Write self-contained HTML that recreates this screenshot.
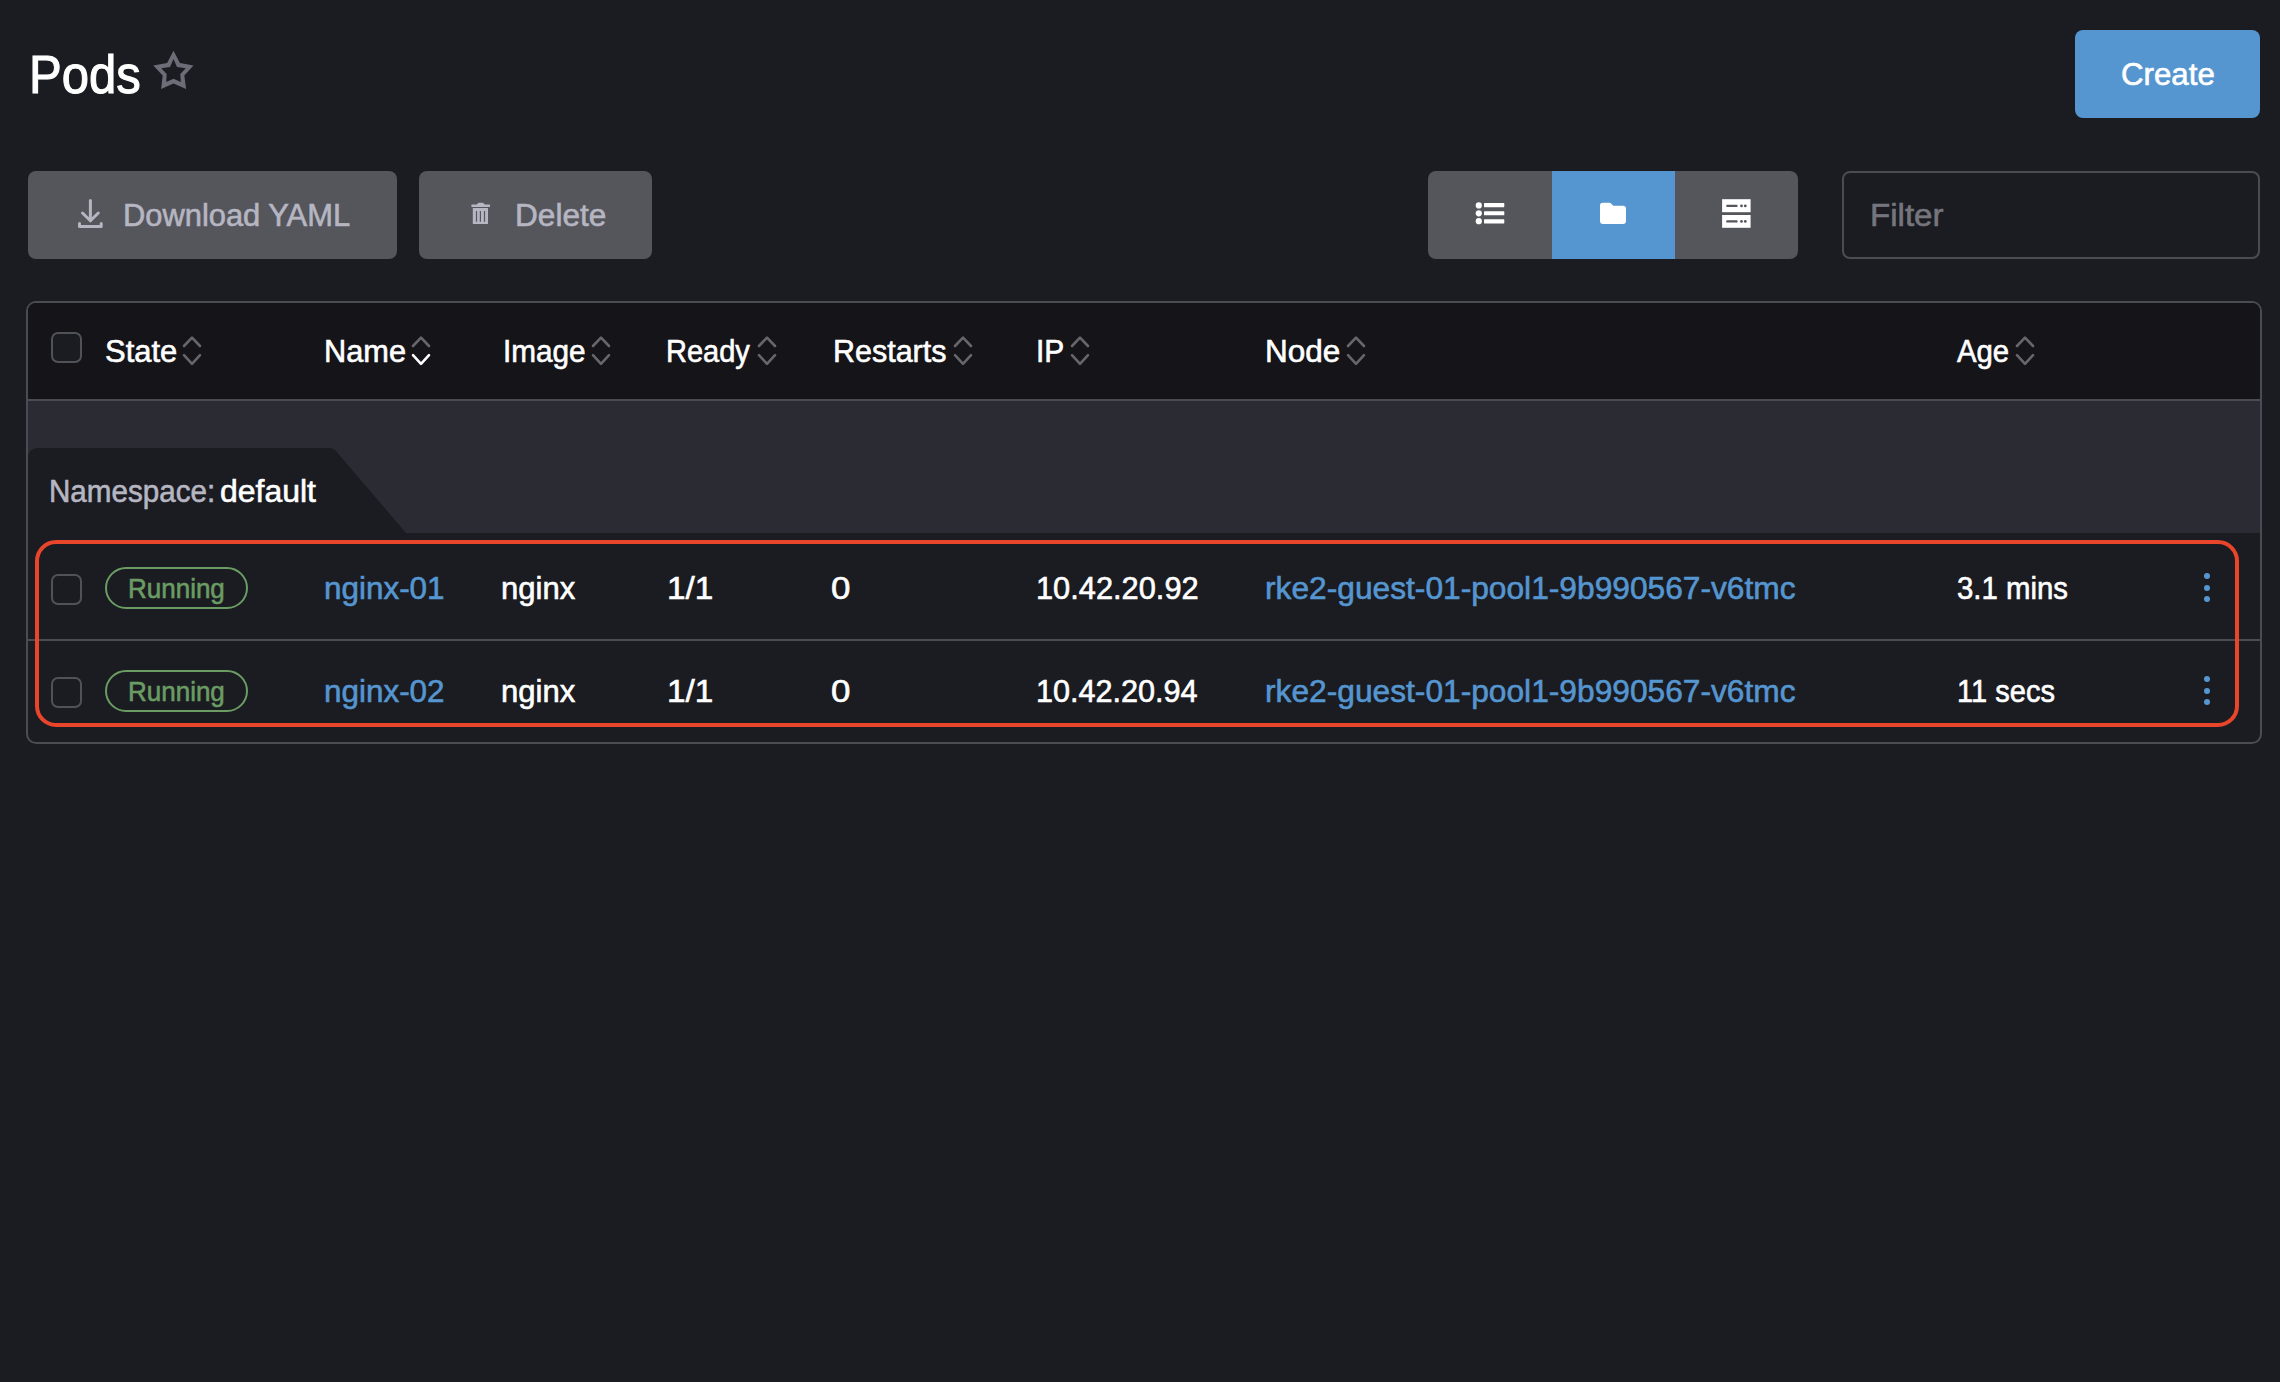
<!DOCTYPE html>
<html><head><meta charset="utf-8"><title>Pods</title>
<style>
html,body{margin:0;padding:0;}
body{width:2280px;height:1382px;background:#1b1c21;overflow:hidden;position:relative;font-family:"Liberation Sans",sans-serif;}
.abs{position:absolute;}
.tx{position:absolute;white-space:nowrap;transform-origin:0 0;-webkit-text-stroke:0.6px currentColor;}
.btn{position:absolute;border-radius:8px;background:#55555c;}
.cb{position:absolute;width:27px;height:27px;border:2px solid #515258;border-radius:7px;background:#1b1c21;box-sizing:content-box;}
.badge{position:absolute;left:105px;width:139px;height:38px;border:2px solid #6a9c63;border-radius:21px;}
.kebab{position:absolute;left:2204px;width:6px;height:6px;border-radius:3px;background:#5596d0;}
.divider{position:absolute;left:28px;width:2232px;height:2px;background:#4b4c53;}
</style></head>
<body>
<header>
  <h1 style="margin:0;font-weight:normal"><span class="tx" style="left:28.63px;top:47.90px;font-size:53.5px;line-height:53.5px;-webkit-text-stroke:1.1px currentColor;color:#ffffff;transform:scaleX(0.9166)">Pods</span></h1>
  <svg class="abs" style="left:150px;top:47px" width="48" height="46" viewBox="150 47 48 46">
    <path fill="#6c6d77" fill-rule="evenodd" d="M173.5,50.8 L179.9,62.9 L193.5,65.6 L184.3,75.4 L186.1,89 L173.5,83.4 L161.1,89 L162.7,75.4 L153.3,65.6 L167.1,62.9 Z M173.5,58.9 L170,67.1 L161.3,68.2 L166.7,74.1 L166.2,82.1 L173.5,78.8 L180.8,82.1 L180.3,74.1 L185.7,68.2 L177,67.1 Z"/>
  </svg>
  <div class="btn" style="left:2075px;top:30px;width:185px;height:88px;background:#5596d0"></div>
  <span class="tx" style="left:2120.99px;top:58.95px;font-size:31px;line-height:31px;color:#ffffff;transform:scaleX(1.0077)">Create</span>
</header>
<section class="actions">
  <div class="btn" style="left:28px;top:171px;width:369px;height:88px"></div>
  <svg class="abs" style="left:76px;top:196px" width="30" height="36" viewBox="76 196 30 36">
    <g fill="none" stroke="#b6b6c2" stroke-width="3" stroke-linecap="round" stroke-linejoin="round">
      <line x1="90.4" y1="200.5" x2="90.4" y2="220"/>
      <polyline points="82.5,213 90.4,220.8 98.3,213"/>
      <polyline points="79.5,223.5 79.5,226.5 101.2,226.5 101.2,223.5"/>
    </g>
  </svg>
  <span class="tx" style="left:123.31px;top:200.05px;font-size:31px;line-height:31px;color:#b6b6c2;transform:scaleX(0.9958)">Download YAML</span>
  <div class="btn" style="left:419px;top:171px;width:233px;height:88px"></div>
  <svg class="abs" style="left:468px;top:200px" width="26" height="28" viewBox="468 200 26 28">
    <g fill="#b6b6c2">
      <path d="M476.6,204.9 L478.2,203 Q478.5,202.7 479,202.7 L482.6,202.7 Q483.1,202.7 483.4,203 L485,204.9 Z"/>
      <rect x="471.3" y="204.6" width="18.8" height="2.4" rx="0.8"/>
      <path fill-rule="evenodd" d="M472.8,208 H488 V224 H472.8 Z M475.9,211 H477.1 V221.8 H475.9 Z M479.8,211 H481 V221.8 H479.8 Z M483.9,211 H485.1 V221.8 H483.9 Z"/>
    </g>
  </svg>
  <span class="tx" style="left:515.26px;top:199.75px;font-size:31px;line-height:31px;color:#b6b6c2;transform:scaleX(1.0189)">Delete</span>

  <div class="btn" style="left:1428px;top:171px;width:370px;height:88px;overflow:hidden">
    <div class="abs" style="left:124px;top:0;width:123px;height:88px;background:#5596d0"></div>
  </div>
  <svg class="abs" style="left:1470px;top:196px" width="40" height="34" viewBox="1470 196 40 34">
    <g fill="#fff">
      <circle cx="1478.8" cy="205.4" r="3.1"/><circle cx="1478.8" cy="213.3" r="3.1"/><circle cx="1478.8" cy="221.2" r="3.1"/>
      <rect x="1484" y="203.1" width="20.3" height="4.1" rx="0.6"/>
      <rect x="1484" y="211.2" width="20.3" height="4.1" rx="0.6"/>
      <rect x="1484" y="219.3" width="20.3" height="4.1" rx="0.6"/>
    </g>
  </svg>
  <svg class="abs" style="left:1596px;top:198px" width="34" height="30" viewBox="1596 198 34 30">
    <path fill="#fff" d="M1602.6,202.8 H1609.2 Q1610.4,202.8 1611.1,203.6 L1613.2,205.8 H1623 Q1626,205.8 1626,208.8 V221.1 Q1626,224.1 1623,224.1 H1603 Q1600,224.1 1600,221.1 V205.4 Q1600,202.8 1602.6,202.8 Z"/>
  </svg>
  <svg class="abs" style="left:1718px;top:196px" width="38" height="36" viewBox="1718 196 38 36">
    <g fill="#fff"><rect x="1722.1" y="199.2" width="28.5" height="13"/><rect x="1722.1" y="215" width="28.5" height="12.8"/></g>
    <g fill="#55555c">
      <rect x="1726.2" y="204.8" width="11.4" height="2.2" rx="0.9"/><circle cx="1741.5" cy="205.9" r="1.4"/><circle cx="1745.3" cy="205.9" r="1.4"/>
      <rect x="1726.2" y="220.3" width="11.4" height="2.3" rx="0.9"/><circle cx="1741.5" cy="221.4" r="1.4"/><circle cx="1745.3" cy="221.4" r="1.4"/>
    </g>
  </svg>
  <div class="abs" style="left:1842px;top:171px;width:414px;height:84px;border:2px solid #4b4c53;border-radius:8px"></div>
  <span class="tx" style="left:1869.67px;top:200.45px;font-size:31px;line-height:31px;color:#75757d;transform:scaleX(1.0666)">Filter</span>
</section>

<main>
  <div class="abs" style="left:26px;top:301px;width:2232px;height:439px;border:2px solid #4b4c53;border-radius:10px;overflow:hidden">
    <div class="abs" style="left:0;top:0;width:2232px;height:96px;background:#141419"></div>
    <div class="abs" style="left:0;top:96px;width:2232px;height:2px;background:#4b4c53"></div>
    <div class="abs" style="left:0;top:98px;width:2232px;height:132px;background:#2b2b34"></div>
    <svg class="abs" style="left:0;top:145px" width="400" height="86" viewBox="0 0 400 86">
      <path fill="#1b1c21" d="M0,10 Q0,0 10,0 L302,0 Q305.5,0 307.5,2.5 L378,85 L378,86 L0,86 Z"/>
    </svg>
  </div>
  <div class="cb" style="left:51px;top:332px;"></div>
  <span class="tx" style="left:104.70px;top:335.95px;font-size:31px;line-height:31px;color:#ffffff;transform:scaleX(0.9980)">State</span><svg class="abs" style="left:180.0px;top:333px" width="24" height="36" viewBox="0 0 24 36"><polyline points="4,13 12,4.6 20,13" fill="none" stroke="#66666b" stroke-width="2.6" stroke-linecap="round" stroke-linejoin="round"/><polyline points="4,22.2 12,30.8 20,22.2" fill="none" stroke="#66666b" stroke-width="2.6" stroke-linecap="round" stroke-linejoin="round"/></svg>
  <span class="tx" style="left:324.02px;top:335.95px;font-size:31px;line-height:31px;color:#ffffff;transform:scaleX(0.9918)">Name</span><svg class="abs" style="left:409.0px;top:333px" width="24" height="36" viewBox="0 0 24 36"><polyline points="4,13 12,4.6 20,13" fill="none" stroke="#66666b" stroke-width="2.6" stroke-linecap="round" stroke-linejoin="round"/><polyline points="4,22.2 12,30.8 20,22.2" fill="none" stroke="#ffffff" stroke-width="2.6" stroke-linecap="round" stroke-linejoin="round"/></svg>
  <span class="tx" style="left:502.58px;top:335.95px;font-size:31px;line-height:31px;color:#ffffff;transform:scaleX(0.9588)">Image</span><svg class="abs" style="left:589.0px;top:333px" width="24" height="36" viewBox="0 0 24 36"><polyline points="4,13 12,4.6 20,13" fill="none" stroke="#66666b" stroke-width="2.6" stroke-linecap="round" stroke-linejoin="round"/><polyline points="4,22.2 12,30.8 20,22.2" fill="none" stroke="#66666b" stroke-width="2.6" stroke-linecap="round" stroke-linejoin="round"/></svg>
  <span class="tx" style="left:666.33px;top:335.95px;font-size:31px;line-height:31px;color:#ffffff;transform:scaleX(0.9352)">Ready</span><svg class="abs" style="left:754.5px;top:333px" width="24" height="36" viewBox="0 0 24 36"><polyline points="4,13 12,4.6 20,13" fill="none" stroke="#66666b" stroke-width="2.6" stroke-linecap="round" stroke-linejoin="round"/><polyline points="4,22.2 12,30.8 20,22.2" fill="none" stroke="#66666b" stroke-width="2.6" stroke-linecap="round" stroke-linejoin="round"/></svg>
  <span class="tx" style="left:832.53px;top:335.95px;font-size:31px;line-height:31px;color:#ffffff;transform:scaleX(0.9830)">Restarts</span><svg class="abs" style="left:950.5px;top:333px" width="24" height="36" viewBox="0 0 24 36"><polyline points="4,13 12,4.6 20,13" fill="none" stroke="#66666b" stroke-width="2.6" stroke-linecap="round" stroke-linejoin="round"/><polyline points="4,22.2 12,30.8 20,22.2" fill="none" stroke="#66666b" stroke-width="2.6" stroke-linecap="round" stroke-linejoin="round"/></svg>
  <span class="tx" style="left:1035.87px;top:335.95px;font-size:31px;line-height:31px;color:#ffffff;transform:scaleX(0.9657)">IP</span><svg class="abs" style="left:1067.7px;top:333px" width="24" height="36" viewBox="0 0 24 36"><polyline points="4,13 12,4.6 20,13" fill="none" stroke="#66666b" stroke-width="2.6" stroke-linecap="round" stroke-linejoin="round"/><polyline points="4,22.2 12,30.8 20,22.2" fill="none" stroke="#66666b" stroke-width="2.6" stroke-linecap="round" stroke-linejoin="round"/></svg>
  <span class="tx" style="left:1265.47px;top:335.95px;font-size:31px;line-height:31px;color:#ffffff;transform:scaleX(1.0160)">Node</span><svg class="abs" style="left:1344.0px;top:333px" width="24" height="36" viewBox="0 0 24 36"><polyline points="4,13 12,4.6 20,13" fill="none" stroke="#66666b" stroke-width="2.6" stroke-linecap="round" stroke-linejoin="round"/><polyline points="4,22.2 12,30.8 20,22.2" fill="none" stroke="#66666b" stroke-width="2.6" stroke-linecap="round" stroke-linejoin="round"/></svg>
  <span class="tx" style="left:1957.00px;top:335.95px;font-size:31px;line-height:31px;color:#ffffff;transform:scaleX(0.9459)">Age</span><svg class="abs" style="left:2012.5px;top:333px" width="24" height="36" viewBox="0 0 24 36"><polyline points="4,13 12,4.6 20,13" fill="none" stroke="#66666b" stroke-width="2.6" stroke-linecap="round" stroke-linejoin="round"/><polyline points="4,22.2 12,30.8 20,22.2" fill="none" stroke="#66666b" stroke-width="2.6" stroke-linecap="round" stroke-linejoin="round"/></svg>
  <span class="tx" style="left:49.39px;top:476.45px;font-size:31px;line-height:31px;color:#b6b6c2;transform:scaleX(0.9545)">Namespace:</span><span class="tx" style="left:219.67px;top:476.45px;font-size:31px;line-height:31px;color:#ffffff;transform:scaleX(1.0307)">default</span>

  <div class="divider" style="top:639px"></div>
  <div class="cb" style="left:51px;top:574px;"></div>
  <div class="badge" style="top:567px"></div>
  <span class="tx" style="left:128.31px;top:574.92px;font-size:27.5px;line-height:27.5px;color:#6a9c63;transform:scaleX(0.9451)">Running</span><span class="tx" style="left:324.17px;top:572.95px;font-size:31px;line-height:31px;color:#5596d0;transform:scaleX(1.0141)">nginx-01</span><span class="tx" style="left:501.00px;top:572.95px;font-size:31px;line-height:31px;color:#ffffff;transform:scaleX(1.0012)">nginx</span><span class="tx" style="left:666.85px;top:572.95px;font-size:31px;line-height:31px;color:#ffffff;transform:scaleX(1.0739)">1/1</span><span class="tx" style="left:831.38px;top:572.95px;font-size:31px;line-height:31px;color:#ffffff;transform:scaleX(1.1250)">0</span><span class="tx" style="left:1036.01px;top:572.95px;font-size:31px;line-height:31px;color:#ffffff;transform:scaleX(0.9930)">10.42.20.92</span><span class="tx" style="left:1265.25px;top:572.95px;font-size:31px;line-height:31px;color:#5596d0;transform:scaleX(1.0229)">rke2-guest-01-pool1-9b990567-v6tmc</span><span class="tx" style="left:1957.05px;top:572.95px;font-size:31px;line-height:31px;color:#ffffff;transform:scaleX(0.9468)">3.1 mins</span>
  <div class="kebab" style="top:573.2px"></div><div class="kebab" style="top:584.6px"></div><div class="kebab" style="top:595.8px"></div>

  <div class="cb" style="left:51px;top:677px;"></div>
  <div class="badge" style="top:670px"></div>
  <span class="tx" style="left:128.31px;top:677.92px;font-size:27.5px;line-height:27.5px;color:#6a9c63;transform:scaleX(0.9451)">Running</span><span class="tx" style="left:324.17px;top:675.95px;font-size:31px;line-height:31px;color:#5596d0;transform:scaleX(1.0141)">nginx-02</span><span class="tx" style="left:501.00px;top:675.95px;font-size:31px;line-height:31px;color:#ffffff;transform:scaleX(1.0012)">nginx</span><span class="tx" style="left:666.85px;top:675.95px;font-size:31px;line-height:31px;color:#ffffff;transform:scaleX(1.0739)">1/1</span><span class="tx" style="left:831.38px;top:675.95px;font-size:31px;line-height:31px;color:#ffffff;transform:scaleX(1.1250)">0</span><span class="tx" style="left:1036.03px;top:675.95px;font-size:31px;line-height:31px;color:#ffffff;transform:scaleX(0.9869)">10.42.20.94</span><span class="tx" style="left:1265.25px;top:675.95px;font-size:31px;line-height:31px;color:#5596d0;transform:scaleX(1.0229)">rke2-guest-01-pool1-9b990567-v6tmc</span><span class="tx" style="left:1957.13px;top:675.95px;font-size:31px;line-height:31px;color:#ffffff;transform:scaleX(0.9369)">11 secs</span>
  <div class="kebab" style="top:676.2px"></div><div class="kebab" style="top:687.5px"></div><div class="kebab" style="top:698.7px"></div>

  <div class="abs" style="left:35px;top:540px;width:2196px;height:179px;border:4px solid #e9452a;border-radius:21px"></div>
</main>
</body></html>
